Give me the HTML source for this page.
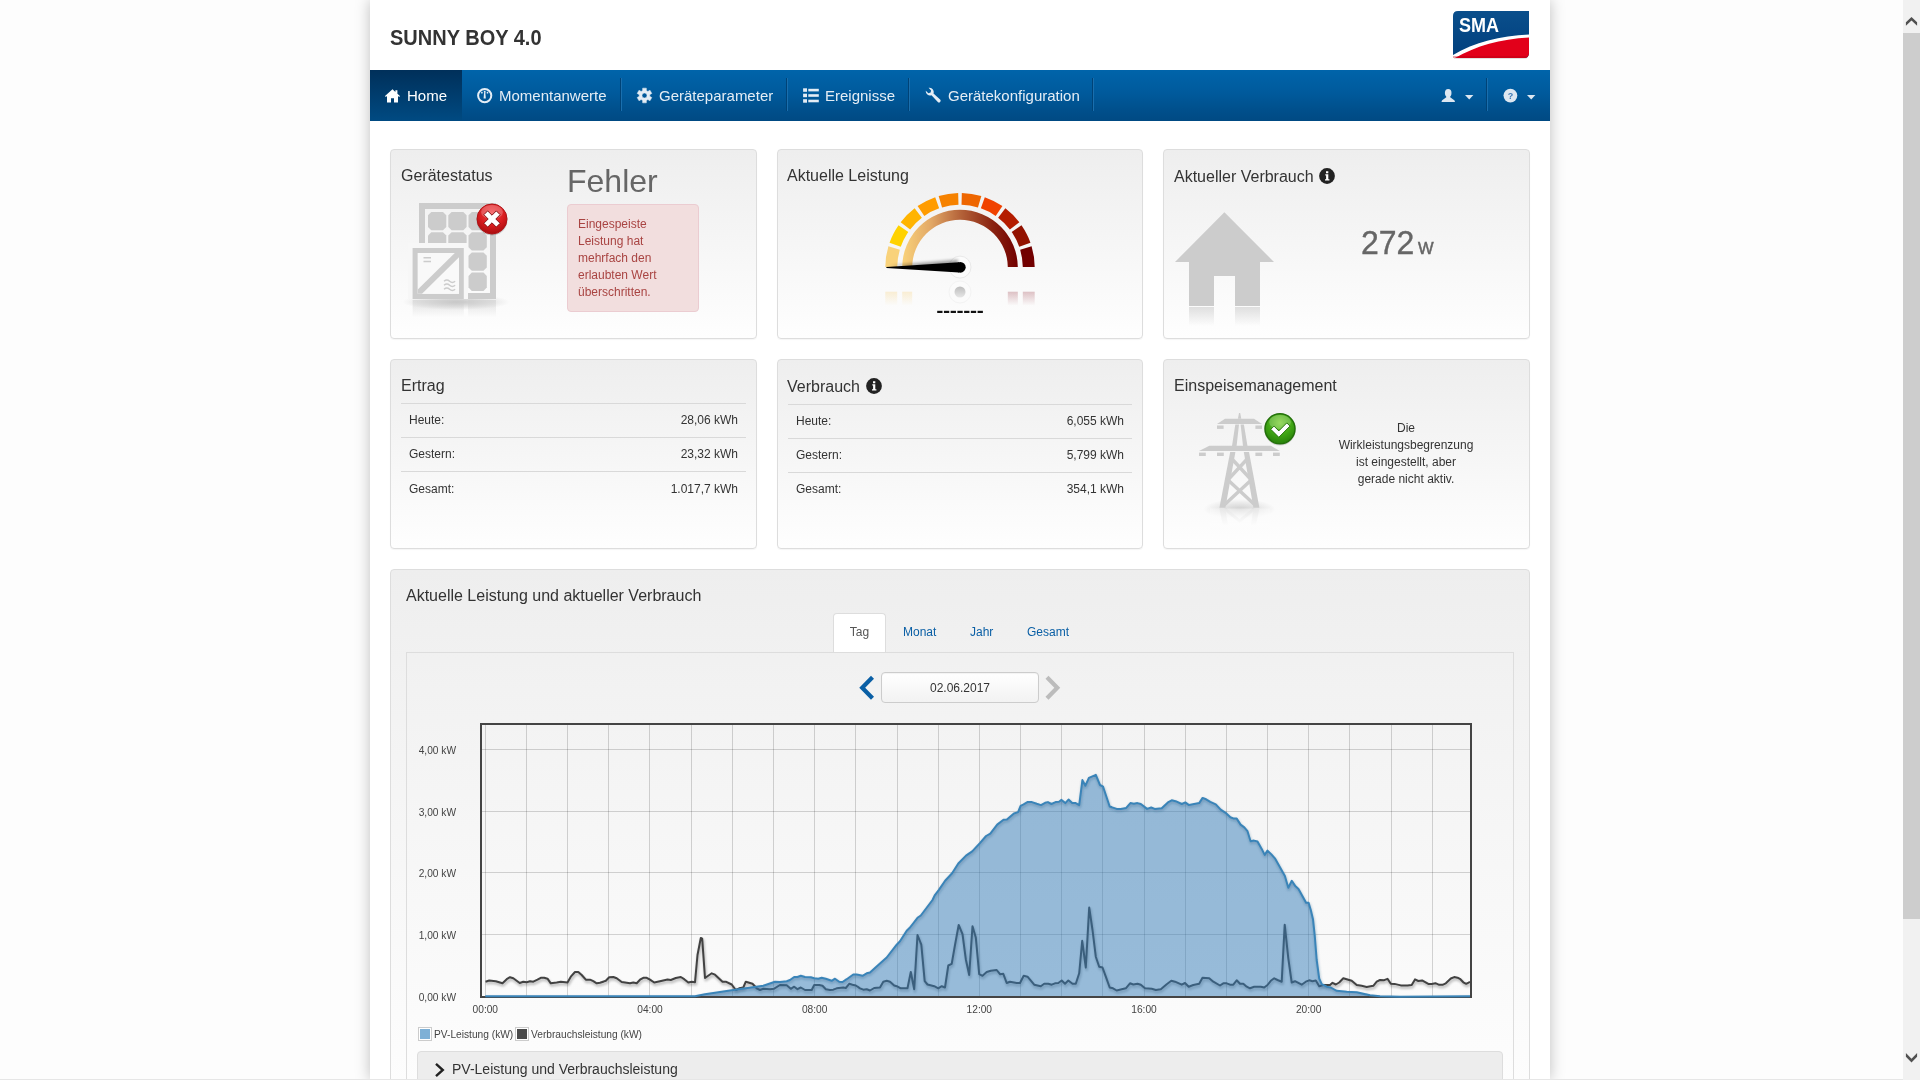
<!DOCTYPE html>
<html lang="de">
<head>
<meta charset="utf-8">
<title>SUNNY BOY 4.0</title>
<style>
*{box-sizing:border-box;margin:0;padding:0}
html,body{width:1920px;height:1080px;overflow:hidden;background:#fdfdfd;font-family:"Liberation Sans",sans-serif;color:#333}
.abs{position:absolute}
#wrap{will-change:transform;overflow:hidden;position:absolute;left:370px;top:0;width:1180px;height:1080px;background:#fff;box-shadow:0 0 14px rgba(0,0,0,.25)}
#title{transform:scaleY(1.07);transform-origin:0 18.6px;position:absolute;left:20px;top:26px;font-size:20px;font-weight:bold;color:#333;line-height:24px;white-space:nowrap}
#nav{position:absolute;left:0;top:70px;width:1180px;height:51px;background:linear-gradient(#0064aa 0%,#005a9c 45%,#004f8b 80%,#004a83 100%)}
#nav .act{position:absolute;left:0;top:0;width:92px;height:51px;background:linear-gradient(#00305a,#004a82)}
#nav .t{position:absolute;top:16px;font-size:15px;line-height:20px;color:#e4edf5;white-space:nowrap}
#nav .dv{position:absolute;top:8px;width:2px;height:33px;background:linear-gradient(90deg,#004377 0,#004377 1px,#1a6fae 1px,#1a6fae 2px)}
#nav svg{position:absolute}
.card{position:absolute;width:367px;height:190px;border:1px solid #ddd;border-radius:4px;background:linear-gradient(#eee,#fefefe);box-shadow:0 1px 1px rgba(0,0,0,.04)}
.h4{position:absolute;font-size:16px;line-height:20px;color:#333;white-space:nowrap}
.ln{position:absolute;height:1px;background:#d9d9d9}
.s12{position:absolute;font-size:12px;line-height:17px;color:#333;white-space:nowrap}
.r{text-align:right}
#panel{position:absolute;left:20px;top:569px;width:1140px;height:600px;border:1px solid #ddd;border-radius:4px;background:linear-gradient(#eee 0,#f3f3f3 150px,#fcfcfc 480px,#fff 600px)}
#tabc{position:absolute;left:36px;top:652px;width:1108px;height:500px;border:1px solid #ddd;border-bottom:0}
#sb{position:absolute;left:1903px;top:0;width:17px;height:1080px;background:#f1f1f1}
#sb .th{position:absolute;left:0;top:33px;width:17px;height:886px;background:#cdcdcd}
</style>
</head>
<body>
<div id="wrap">
<div id="title">SUNNY BOY 4.0</div>

<!-- SMA logo -->
<svg class="abs" style="left:1082px;top:10px" width="78" height="50" viewBox="0 0 78 50">
<defs>
<clipPath id="lg"><path d="M6 1H77V43Q77 48 72 48H1V6Q1 1 6 1Z"/></clipPath>
<linearGradient id="lgb" x1="0" y1="0" x2="0" y2="1"><stop offset="0" stop-color="#0a4f8c"/><stop offset="1" stop-color="#003f7d"/></linearGradient>
</defs>
<path d="M6 2H77V44Q77 49 72 49H2V7Q1 2 6 2Z" fill="#000" opacity=".12"/>
<g clip-path="url(#lg)">
<rect x="0" y="0" width="78" height="50" fill="url(#lgb)"/>
<path d="M0 47 C22 34 48 27 78 25.5 V50 H0Z" fill="#e2001a"/>
<path d="M0 45.5 C22 32.5 48 25.5 78 24.5 V27.5 C48 29 24 36 2 48.5 H0Z" fill="#fff"/>
<rect x="0" y="46" width="78" height="3" fill="#b00014" opacity=".35"/>
</g>
<text x="7" y="21.900" font-family="Liberation Sans, sans-serif" font-weight="bold" font-size="19.600" fill="#fff" textLength="40" lengthAdjust="spacingAndGlyphs">SMA</text>
</svg>

<div id="nav">
<div class="act"></div>
<!-- home icon -->
<svg style="left:15px;top:19px" width="15" height="14" viewBox="0 0 15 14"><path d="M7.5 0.3 L10.4 2.9 V1.2 H12.4 V4.7 L15 7 L14.2 7.9 L13 6.9 V13.6 H9 V9.2 H6 V13.6 H2 V6.9 L0.8 7.9 L0 7 Z" fill="#fff"/></svg>
<div class="t" style="left:37px;color:#fff">Home</div>
<!-- dashboard icon -->
<svg style="left:106px;top:17px" width="18" height="18" viewBox="0 0 18 18"><circle cx="8.700" cy="8.600" r="6.600" fill="none" stroke="#e4edf5" stroke-width="2"/><path d="M8.100 5.200h1.200l.5 6.200h-2.200z" fill="#e4edf5"/><circle cx="8.700" cy="4.700" r=".95" fill="#e4edf5"/><circle cx="5.900" cy="5.700" r=".85" fill="#e4edf5"/><circle cx="11.500" cy="5.700" r=".85" fill="#e4edf5"/></svg>
<div class="t" style="left:129px">Momentanwerte</div>
<div class="dv" style="left:250px"></div>
<!-- cog -->
<svg style="left:266px;top:17px" width="17" height="17" viewBox="0 0 17 17"><path fill="#e4edf5" stroke="#e4edf5" stroke-width=".5" stroke-linejoin="round" fill-rule="evenodd" transform="translate(.5,.5)" d="M9.90 3.05L9.84 0.63L6.16 0.63L6.10 3.05L4.66 3.88L2.53 2.72L0.69 5.91L2.77 7.17L2.77 8.83L0.69 10.09L2.53 13.28L4.66 12.12L6.10 12.95L6.16 15.37L9.84 15.37L9.90 12.95L11.34 12.12L13.47 13.28L15.31 10.09L13.23 8.83L13.23 7.17L15.31 5.91L13.47 2.72L11.34 3.88ZM5.50 8.00a2.50 2.50 0 1 0 5.00 0a2.50 2.50 0 1 0 -5.00 0Z"/></svg>
<div class="t" style="left:289px">Geräteparameter</div>
<div class="dv" style="left:416px"></div>
<!-- list -->
<svg style="left:432px;top:18px" width="18" height="16" viewBox="0 0 18 16"><g fill="#e4edf5"><rect x="1.100" y="0.300" width="3.900" height="3.500"/><rect x="6.300" y="0.800" width="10.500" height="2.600"/><rect x="1.100" y="5.700" width="3.900" height="3.500"/><rect x="6.300" y="6.200" width="10.500" height="2.600"/><rect x="1.100" y="11.200" width="3.900" height="3.500"/><rect x="6.300" y="11.700" width="10.500" height="2.600"/></g></svg>
<div class="t" style="left:455px">Ereignisse</div>
<div class="dv" style="left:538px"></div>
<!-- wrench -->
<svg style="left:553.500px;top:17.200px" width="17" height="16" viewBox="0 0 17 16"><path fill="#e4edf5" d="M4.600 0.800 a4.3 4.3 0 0 1 4.9 5.6 l6.6 6.2 a1.6 1.6 0 0 1 -2.3 2.3 l-6.3 -6.6 a4.3 4.3 0 0 1 -5.7 -4.6 l2.6 2.5 2.2 -.6 .5 -2.2z"/></svg>
<div class="t" style="left:578px">Gerätekonfiguration</div>
<div class="dv" style="left:722px"></div>
<!-- user -->
<svg style="left:1071px;top:19px" width="15" height="14" viewBox="0 0 15 14"><g fill="#dde7f1"><ellipse cx="7.200" cy="4" rx="3.300" ry="3.900"/><path d="M5.300 6.500V8.300L1.200 11.300Q0.500 11.900 0.600 12.900H13.900Q14 11.900 13.300 11.300L9.200 8.300V6.500Z"/></g></svg>
<svg style="left:1095px;top:25px" width="9" height="5" viewBox="0 0 9 5"><path d="M0 0H8.400L4.200 4.400Z" fill="#dde7f1"/></svg>
<div class="dv" style="left:1116px"></div>
<!-- help -->
<svg style="left:1133px;top:18px" width="15" height="15" viewBox="0 0 15 15"><circle cx="7.400" cy="7.600" r="6.900" fill="#dde7f1"/><text x="7.400" y="10.700" text-anchor="middle" font-family="Liberation Sans, sans-serif" font-weight="bold" font-size="9" fill="#3f7ab5">?</text></svg>
<svg style="left:1157px;top:25px" width="9" height="5" viewBox="0 0 9 5"><path d="M0 0H8.400L4.200 4.400Z" fill="#dde7f1"/></svg>
</div>
<!-- ROW 1 -->
<div class="card" style="left:20px;top:149px"></div>
<div class="card" style="left:407px;top:149px;width:366px"></div>
<div class="card" style="left:793px;top:149px"></div>
<!-- ROW 2 -->
<div class="card" style="left:20px;top:359px"></div>
<div class="card" style="left:407px;top:359px;width:366px"></div>
<div class="card" style="left:793px;top:359px"></div>

<!-- card 1: Gerätestatus -->
<div class="h4" style="left:31px;top:166px">Gerätestatus</div>
<div class="abs" style="left:197px;top:163px;font-size:32px;line-height:36px;color:#666;white-space:nowrap">Fehler</div>
<div class="abs" style="left:197px;top:204px;width:132px;height:108px;background:#f2dede;border:1px solid #ebccd1;border-radius:4px"></div>
<div class="s12" style="left:208px;top:216px;color:#a94442">Eingespeiste<br>Leistung hat<br>mehrfach den<br>erlaubten Wert<br>überschritten.</div>
<!-- pv + inverter icon -->
<svg class="abs" style="left:30px;top:195px" width="110" height="130" viewBox="0 0 110 130">
<defs>
<linearGradient id="rf1" x1="0" y1="0" x2="0" y2="1"><stop offset="0" stop-color="#ccc" stop-opacity=".55"/><stop offset="1" stop-color="#ccc" stop-opacity="0"/></linearGradient>
<radialGradient id="sh1" cx=".5" cy=".5" r=".5"><stop offset="0" stop-color="#000" stop-opacity=".22"/><stop offset="1" stop-color="#000" stop-opacity="0"/></radialGradient>
<radialGradient id="rd" cx=".5" cy=".3" r=".7"><stop offset="0" stop-color="#f4484b"/><stop offset=".6" stop-color="#d81c1f"/><stop offset="1" stop-color="#a80e10"/></radialGradient>
</defs>
<ellipse cx="56" cy="107" rx="54" ry="8" fill="url(#sh1)"/>
<g fill="#ccc">
<path fill-rule="evenodd" d="M19 8H96V104H19ZM25 14V98H90V14Z"/>
<path d="M31.3 17.0h11.7l3.3 3.3v11.7l-3.3 3.3h-11.7l-3.3 -3.3v-11.7z"/><path d="M51.6 17.0h11.7l3.3 3.3v11.7l-3.3 3.3h-11.7l-3.3 -3.3v-11.7z"/><path d="M71.8 17.0h11.7l3.3 3.3v11.7l-3.3 3.3h-11.7l-3.3 -3.3v-11.7z"/><path d="M31.3 37.2h11.7l3.3 3.3v11.7l-3.3 3.3h-11.7l-3.3 -3.3v-11.7z"/><path d="M51.6 37.2h11.7l3.3 3.3v11.7l-3.3 3.3h-11.7l-3.3 -3.3v-11.7z"/><path d="M71.8 37.2h11.7l3.3 3.3v11.7l-3.3 3.3h-11.7l-3.3 -3.3v-11.7z"/><path d="M71.8 57.4h11.7l3.3 3.3v11.7l-3.3 3.3h-11.7l-3.3 -3.3v-11.7z"/><path d="M71.8 77.6h11.7l3.3 3.3v11.7l-3.3 3.3h-11.7l-3.3 -3.3v-11.7z"/>
</g>
<rect x="8" y="48" width="60" height="56" fill="#f7f7f7"/>
<path fill="#ccc" fill-rule="evenodd" d="M12.600 53H63.800V104H12.600ZM17.800 58V98.800H59V58Z"/>
<rect x="17.800" y="58" width="41.200" height="40.800" fill="#f9f9f9"/>
<path d="M17.800 98.800V94.600L54.800 58H59V62.200L22 98.800Z" fill="#ccc"/>
<g stroke="#ccc" stroke-width="1.500" fill="none"><path d="M23.500 62.800h7.500M23.500 66.600h7.500"/><path d="M44 86.200c2-1.700 3.700-1.700 5.600 0s3.600 1.700 5.500 0M44 90.200c2-1.700 3.700-1.700 5.600 0s3.600 1.700 5.500 0M44 94.200c2-1.700 3.700-1.700 5.600 0s3.600 1.700 5.500 0"/></g>
<!-- reflection -->
<rect x="12.600" y="105" width="51.200" height="17" fill="url(#rf1)"/>
<rect x="68" y="105" width="28" height="17" fill="url(#rf1)"/>
<!-- red error badge -->
<circle cx="92" cy="25" r="15.500" fill="#000" opacity=".18"/>
<circle cx="92" cy="24" r="15" fill="url(#rd)" stroke="#b01215" stroke-width="1"/>
<ellipse cx="92" cy="17" rx="11" ry="7" fill="#fff" opacity=".22"/>
<path d="M83.900 19.700l3.800-3.800 4.300 4.300 4.300-4.300 3.800 3.800-4.300 4.300 4.300 4.300-3.800 3.800-4.300-4.300-4.300 4.300-3.800-3.800 4.300-4.300z" fill="#fff" stroke="#7a0a0c" stroke-width=".9"/>
</svg>

<!-- card 2: Aktuelle Leistung -->
<div class="h4" style="left:417px;top:166px">Aktuelle Leistung</div>
<svg class="abs" style="left:500px;top:180px" width="180" height="150" viewBox="0 0 180 150">
<defs><linearGradient id="gi" x1="0" y1="0" x2="1" y2="0"><stop offset="0" stop-color="#f9d27a"/><stop offset=".25" stop-color="#e2a866"/><stop offset=".5" stop-color="#b5643a"/><stop offset=".78" stop-color="#8a2412"/><stop offset="1" stop-color="#720000"/></linearGradient>
<linearGradient id="gfade" x1="0" y1="0" x2="0" y2="1"><stop offset="0" stop-color="#fff" stop-opacity=".55"/><stop offset="1" stop-color="#fff" stop-opacity="1"/></linearGradient>
<linearGradient id="hubr" x1="0" y1="0" x2="0" y2="1"><stop offset="0" stop-color="#bdbdbd"/><stop offset="1" stop-color="#e6e6e6"/></linearGradient>
<filter id="nb" x="-20%" y="-100%" width="140%" height="300%"><feGaussianBlur stdDeviation="1.6"/></filter></defs>
<clipPath id="gcl"><rect x="0" y="0" width="180" height="86.9"/></clipPath><g clip-path="url(#gcl)">
<path d="M15.30 87.60A74.7 74.7 0 0 1 18.41 66.26L29.82 69.66A62.8 62.8 0 0 0 27.20 87.60Z" fill="#f9d27a"/>
<path d="M19.54 62.79A74.7 74.7 0 0 1 28.51 45.18L38.31 51.94A62.8 62.8 0 0 0 30.77 66.74Z" fill="#ffd200"/>
<path d="M30.66 42.23A74.7 74.7 0 0 1 44.63 28.26L51.86 37.71A62.8 62.8 0 0 0 40.11 49.46Z" fill="#ffb400"/>
<path d="M47.58 26.11A74.7 74.7 0 0 1 65.19 17.14L69.14 28.37A62.8 62.8 0 0 0 54.34 35.91Z" fill="#ff9c00"/>
<path d="M68.66 16.01A74.7 74.7 0 0 1 88.17 12.92L88.47 24.82A62.8 62.8 0 0 0 72.06 27.42Z" fill="#f68200"/>
<path d="M91.83 12.92A74.7 74.7 0 0 1 111.34 16.01L107.94 27.42A62.8 62.8 0 0 0 91.53 24.82Z" fill="#ee6600"/>
<path d="M114.81 17.14A74.7 74.7 0 0 1 132.42 26.11L125.66 35.91A62.8 62.8 0 0 0 110.86 28.37Z" fill="#f04200"/>
<path d="M135.37 28.26A74.7 74.7 0 0 1 149.34 42.23L139.89 49.46A62.8 62.8 0 0 0 128.14 37.71Z" fill="#b41c00"/>
<path d="M151.49 45.18A74.7 74.7 0 0 1 160.46 62.79L149.23 66.74A62.8 62.8 0 0 0 141.69 51.94Z" fill="#921200"/>
<path d="M161.59 66.26A74.7 74.7 0 0 1 164.70 87.60L152.80 87.60A62.8 62.8 0 0 0 150.18 69.66Z" fill="#720000"/>
<path d="M32.20 87.60A57.8 57.8 0 0 1 147.80 87.60L137.80 87.60A47.8 47.8 0 0 0 42.20 87.60Z" fill="url(#gi)"/>
</g>
<linearGradient id="rfg1" x1="0" y1="0" x2="0" y2="1"><stop offset="0" stop-color="#f6c964" stop-opacity=".26"/><stop offset="1" stop-color="#f6c964" stop-opacity="0"/></linearGradient>
<rect x="15.30" y="111.7" width="11.90" height="14" fill="url(#rfg1)"/>
<linearGradient id="rfg2" x1="0" y1="0" x2="0" y2="1"><stop offset="0" stop-color="#f6c964" stop-opacity=".26"/><stop offset="1" stop-color="#f6c964" stop-opacity="0"/></linearGradient>
<rect x="32.20" y="111.7" width="10.00" height="14" fill="url(#rfg2)"/>
<linearGradient id="rfg3" x1="0" y1="0" x2="0" y2="1"><stop offset="0" stop-color="#8a1c2a" stop-opacity=".26"/><stop offset="1" stop-color="#8a1c2a" stop-opacity="0"/></linearGradient>
<rect x="137.80" y="111.7" width="10.00" height="14" fill="url(#rfg3)"/>
<linearGradient id="rfg4" x1="0" y1="0" x2="0" y2="1"><stop offset="0" stop-color="#8a1c2a" stop-opacity=".26"/><stop offset="1" stop-color="#8a1c2a" stop-opacity="0"/></linearGradient>
<rect x="152.80" y="111.7" width="11.90" height="14" fill="url(#rfg4)"/>
<circle cx="90.0" cy="87.1" r="11" fill="#fcfcfc" stroke="#e9e9e9" stroke-width="1"/>
<circle cx="90.0" cy="112.0" r="11" fill="#fbfbfb" stroke="#f3f3f3" stroke-width="1"/>
<circle cx="90.0" cy="112.0" r="5.5" fill="url(#hubr)"/>
<path d="M20.0 85.4L88.0 79.6L88.0 88.6Z" fill="#000" opacity=".35" filter="url(#nb)"/>
<path d="M16.4 86.9L89.0 82.2L89.0 92.6L16.4 88.1Z" fill="#000"/>
<circle cx="90.3" cy="87.3" r="5.4" fill="#000"/>
<rect x="67.20" y="130.800" width="5.300" height="2.200" fill="#111"/>
<rect x="73.93" y="130.800" width="5.300" height="2.200" fill="#111"/>
<rect x="80.66" y="130.800" width="5.300" height="2.200" fill="#111"/>
<rect x="87.39" y="130.800" width="5.300" height="2.200" fill="#111"/>
<rect x="94.12" y="130.800" width="5.300" height="2.200" fill="#111"/>
<rect x="100.85" y="130.800" width="5.300" height="2.200" fill="#111"/>
<rect x="107.58" y="130.800" width="5.300" height="2.200" fill="#111"/>
</svg>

<!-- card 3: Aktueller Verbrauch -->
<div class="h4" style="left:804px;top:167px">Aktueller Verbrauch</div>
<svg class="abs" style="left:949px;top:168px" width="16" height="16" viewBox="0 0 16 16"><circle cx="8" cy="8" r="7.900" fill="#222"/><path d="M6.300 6.300h3v5h1.100v1.300H6v-1.300h1.100V7.600H6.300zM7 3.200h2.300v2H7z" fill="#fff"/></svg>
<svg class="abs" style="left:800px;top:208px" width="110" height="125" viewBox="0 0 110 125">
<defs><linearGradient id="rf3" x1="0" y1="0" x2="0" y2="1"><stop offset="0" stop-color="#ccc" stop-opacity=".6"/><stop offset="1" stop-color="#ccc" stop-opacity="0"/></linearGradient></defs>
<path d="M54.400 4.300 L104 54 H90 V98 H65 V68 H44 V98 H19 V54 H5 Z" fill="#ccc"/>
<rect x="19" y="99" width="25" height="19" fill="url(#rf3)"/><rect x="65" y="99" width="25" height="19" fill="url(#rf3)"/>
</svg>
<div class="abs" style="left:991px;top:224.500px;font-size:32px;line-height:36px;color:#666;white-space:nowrap;-webkit-text-stroke:.35px #666;transform:scaleY(1.04);transform-origin:0 29.500px">272<span style="font-size:16.500px;margin-left:3.500px;-webkit-text-stroke:.5px #666">W</span></div>

<!-- card 4: Ertrag -->
<div class="h4" style="left:31px;top:376px">Ertrag</div>
<div class="ln" style="left:31px;top:403px;width:345px"></div>
<div class="ln" style="left:31px;top:437px;width:345px"></div>
<div class="ln" style="left:31px;top:471px;width:345px"></div>
<div class="s12" style="left:39px;top:412px">Heute:</div><div class="s12 r" style="left:217px;width:151px;top:412px">28,06 kWh</div>
<div class="s12" style="left:39px;top:446px">Gestern:</div><div class="s12 r" style="left:217px;width:151px;top:446px">23,32 kWh</div>
<div class="s12" style="left:39px;top:481px">Gesamt:</div><div class="s12 r" style="left:217px;width:151px;top:481px">1.017,7 kWh</div>

<!-- card 5: Verbrauch -->
<div class="h4" style="left:417px;top:377px">Verbrauch</div>
<svg class="abs" style="left:496px;top:378px" width="16" height="16" viewBox="0 0 16 16"><circle cx="8" cy="8" r="7.900" fill="#222"/><path d="M6.300 6.300h3v5h1.100v1.300H6v-1.300h1.100V7.600H6.300zM7 3.200h2.300v2H7z" fill="#fff"/></svg>
<div class="ln" style="left:418px;top:404px;width:344px"></div>
<div class="ln" style="left:418px;top:438px;width:344px"></div>
<div class="ln" style="left:418px;top:472px;width:344px"></div>
<div class="s12" style="left:426px;top:413px">Heute:</div><div class="s12 r" style="left:604px;width:150px;top:413px">6,055 kWh</div>
<div class="s12" style="left:426px;top:447px">Gestern:</div><div class="s12 r" style="left:604px;width:150px;top:447px">5,799 kWh</div>
<div class="s12" style="left:426px;top:481px">Gesamt:</div><div class="s12 r" style="left:604px;width:150px;top:481px">354,1 kWh</div>

<!-- card 6: Einspeisemanagement -->
<div class="h4" style="left:804px;top:376px">Einspeisemanagement</div>
<div class="s12" style="left:936px;top:420px;width:200px;text-align:center">Die<br>Wirkleistungsbegrenzung<br>ist eingestellt, aber<br>gerade nicht aktiv.</div>
<svg class="abs" style="left:820px;top:405px" width="120" height="130" viewBox="0 0 120 130">
<defs><radialGradient id="sh6" cx=".5" cy=".5" r=".5"><stop offset="0" stop-color="#000" stop-opacity=".17"/><stop offset="1" stop-color="#000" stop-opacity="0"/></radialGradient>
<linearGradient id="rf6" x1="0" y1="0" x2="0" y2="1"><stop offset="0" stop-color="#fafafa" stop-opacity=".45"/><stop offset="1" stop-color="#fdfdfd" stop-opacity="1"/></linearGradient>
<radialGradient id="gr" cx=".5" cy=".3" r=".75"><stop offset="0" stop-color="#7fd03a"/><stop offset=".55" stop-color="#3fa414"/><stop offset="1" stop-color="#237a08"/></radialGradient></defs>
<ellipse cx="49.600" cy="104" rx="36" ry="10" fill="url(#sh6)"/>
<g fill="#ccc"><path d="M49 8h1.200l1.100 5.800h-3.400z"/><path d="M35 13.800H64L72 19H27Z"/><rect x="27" y="20.500" width="6.600" height="3.400"/><rect x="65.400" y="20.500" width="6.600" height="3.400"/><path d="M45.300 19.500h3.700l-2.400 21.500h-4.600zM50.600 19.500h3.300l3.600 21.500h-4.500z"/><path d="M19.400 40.800H80.800L89.800 46H9Z"/><rect x="9" y="47.600" width="6.800" height="3.400"/><rect x="27" y="47.600" width="6.800" height="3.400"/><rect x="65.4" y="47.600" width="6.800" height="3.400"/><rect x="83" y="47.600" width="6.800" height="3.400"/><path d="M40.200 47h5.200L35.400 102.700h-6z"/><path d="M53.800 47h5.200L69.400 102.700h-6z"/></g>
<g stroke="#ccc" stroke-width="3.400" fill="none" stroke-linecap="butt"><path d="M42 54L60.500 74M57.200 54L38.700 74M38 75L65 100M61.200 75L34.200 100"/></g>
<g fill="#ccc" opacity=".5"><path d="M29.400 103.700h6l2.500 16h-5.200zM63.400 103.700h6l-3.300 16h-5.200z"/><path d="M35 104L49.600 116 64 104" stroke="#ccc" stroke-width="3" fill="none"/></g>
<rect x="20" y="103.500" width="60" height="18" fill="url(#rf6)"/>
<circle cx="90" cy="25" r="15.500" fill="#000" opacity=".15"/>
<circle cx="90" cy="23.800" r="15" fill="url(#gr)" stroke="#23700a" stroke-width="1.500"/>
<ellipse cx="90" cy="17" rx="11" ry="7" fill="#fff" opacity=".2"/>
<path d="M80.800 24.300l3.200-3.200 4.800 4.800 8-8 3.200 3.200-11.200 11.200z" fill="#fff" stroke="#1e6a05" stroke-width=".9"/>
</svg>
<!-- chart panel -->
<div id="panel"></div>
<div class="h4" style="left:36px;top:586px">Aktuelle Leistung und aktueller Verbrauch</div>
<div id="tabc"></div>
<div class="abs" style="left:463px;top:613px;width:53px;height:39px;background:#fff;border:1px solid #ddd;border-bottom:0;border-radius:4px 4px 0 0"></div>
<div class="s12" style="left:463px;width:53px;text-align:center;top:624px;color:#555">Tag</div>
<div class="s12" style="left:533px;top:624px;color:#0a5fa5">Monat</div>
<div class="s12" style="left:600px;top:624px;color:#0a5fa5">Jahr</div>
<div class="s12" style="left:657px;top:624px;color:#0a5fa5">Gesamt</div>
<!-- date nav -->
<svg class="abs" style="left:488px;top:674px" width="20" height="28" viewBox="0 0 20 28"><path d="M14.500 3.200L4.200 13.700 14.500 24.300" fill="none" stroke="#0a5fa5" stroke-width="4.200" stroke-linejoin="miter"/></svg>
<div class="abs" style="left:511px;top:672px;width:158px;height:31px;border:1px solid #ccc;border-radius:4px;background:linear-gradient(#fff,#f2f2f2);box-shadow:inset 0 1px 1px rgba(0,0,0,.05)"></div>
<div class="s12" style="left:511px;width:158px;text-align:center;top:680px;color:#333">02.06.2017</div>
<svg class="abs" style="left:673px;top:674px" width="20" height="28" viewBox="0 0 20 28"><path d="M4 3.200L14.300 13.700 4 24.300" fill="none" stroke="#bcbcbc" stroke-width="4.200" stroke-linejoin="miter"/></svg>
<svg class="abs" style="left:30px;top:715px" width="1100" height="310" viewBox="0 0 1100 310">
<defs><clipPath id="pc"><rect x="81" y="9" width="990" height="273"/></clipPath><clipPath id="pc2"><rect x="82" y="10" width="988" height="273"/></clipPath>
<filter id="ls" x="-2%" y="-10%" width="104%" height="130%"><feGaussianBlur stdDeviation="1.1"/></filter></defs>
<path d="M85.5 9V282M126.5 9V282M167.5 9V282M208.5 9V282M249.5 9V282M291.5 9V282M332.5 9V282M373.5 9V282M414.5 9V282M455.5 9V282M497.5 9V282M538.5 9V282M579.5 9V282M620.5 9V282M661.5 9V282M702.5 9V282M744.5 9V282M785.5 9V282M826.5 9V282M867.5 9V282M908.5 9V282M949.5 9V282M991.5 9V282M1032.5 9V282" stroke="#000" stroke-opacity=".16" stroke-width="1" fill="none"/>
<path d="M81 34.5H1071M81 96.5H1071M81 157.5H1071M81 219.5H1071" stroke="#000" stroke-opacity=".16" stroke-width="1" fill="none"/>
<g clip-path="url(#pc)">
<path d="M85.5 266.7L89.2 265.5L95.8 266.2L102.5 268.3L106.7 264.2L110.0 262.2L113.3 263.3L119.7 268.0L123.3 266.7L126.7 267.2L130.0 266.2L133.3 266.7L137.5 264.7L140.8 262.8L144.2 262.8L147.5 263.7L150.8 268.3L156.7 267.5L160.8 266.7L167.5 267.5L170.8 261.7L175.0 257.0L178.3 257.0L181.7 260.0L185.8 264.7L190.0 264.7L193.3 266.2L196.7 268.3L200.0 267.8L205.8 265.8L209.2 262.2L213.3 262.0L216.7 263.3L221.7 267.0L226.7 267.8L230.0 268.3L233.3 267.5L236.7 268.3L240.0 264.7L243.3 262.8L246.7 262.8L250.0 264.7L254.2 267.5L260.0 266.2L267.5 264.5L270.8 265.0L275.8 263.0L280.8 262.0L284.2 264.2L288.3 267.5L291.7 266.7L295.0 267.2L297.5 240.0L300.8 223.0L302.2 223.7L305.0 263.0L311.7 258.3L315.0 259.7L322.5 266.7L325.8 266.7L331.7 269.5L335.8 275.0L339.2 273.3L343.3 272.5L345.8 266.7L349.2 267.8L352.5 268.8L356.7 273.3L360.0 275.0L363.3 273.8L370.0 274.2L374.2 273.7L380.0 270.0L386.7 270.3L390.8 273.8L394.2 271.7L397.5 274.2L400.8 272.5L405.0 275.0L411.7 275.0L414.2 270.0L419.2 270.0L422.5 270.8L425.8 274.2L430.0 275.0L433.3 274.7L436.7 273.3L443.3 272.5L445.8 273.0L449.2 268.8L452.5 269.7L455.8 270.5L460.0 273.3L463.3 274.7L466.7 274.2L470.0 275.5L474.2 273.0L480.0 272.5L483.3 266.7L486.7 265.8L490.0 266.7L494.2 270.5L496.7 271.2L500.8 273.3L507.5 273.3L510.8 257.0L514.2 274.2L517.5 220.0L521.3 229.7L524.7 266.2L527.5 269.5L534.2 271.2L538.3 273.3L541.7 271.2L545.0 272.5L548.3 250.5L551.7 248.8L555.0 230.0L558.7 210.0L562.5 219.2L565.8 244.2L569.2 260.0L572.5 211.3L575.8 222.5L579.2 259.2L582.5 260.8L586.7 257.0L590.8 255.8L596.7 255.0L600.0 259.2L603.3 258.8L606.7 268.0L610.0 266.7L616.7 268.0L620.0 268.0L623.7 260.8L627.5 261.7L634.2 269.7L640.8 271.2L644.2 268.8L648.3 268.8L651.7 269.7L655.0 268.3L658.3 268.0L661.7 265.5L665.0 268.8L668.3 265.5L672.5 268.8L675.8 268.8L679.2 258.3L682.2 225.8L685.8 252.5L689.2 192.5L692.5 215.0L695.8 241.7L699.2 251.7L702.5 252.5L705.8 261.7L709.7 272.5L713.0 273.3L716.7 275.5L725.8 273.3L730.0 268.3L733.3 269.5L737.5 268.7L740.8 269.7L745.0 273.3L751.7 273.8L755.8 275.0L760.8 274.2L766.7 269.2L771.3 265.8L775.0 266.7L781.7 269.7L785.0 268.0L788.7 271.7L793.3 270.0L799.2 268.8L802.5 262.8L809.2 263.3L813.3 266.7L820.0 270.5L823.3 268.3L826.7 268.3L830.0 269.7L833.3 269.7L836.7 265.3L840.0 268.8L843.3 268.8L846.7 271.7L850.0 273.3L854.2 271.7L860.8 271.7L864.2 272.5L867.5 270.0L870.8 265.8L874.2 263.3L877.5 265.0L881.7 266.7L884.7 209.7L888.3 243.3L891.7 267.5L895.0 266.2L901.7 269.7L905.8 266.7L909.2 265.3L912.5 266.2L915.8 265.5L919.2 271.2L923.3 270.0L930.0 270.0L932.5 267.8L935.8 269.5L939.2 267.5L943.3 263.3L948.3 264.7L951.7 265.8L956.7 270.0L961.7 270.8L966.7 272.0L973.3 270.8L976.7 266.7L980.0 265.0L984.2 265.2L987.5 263.8L990.8 268.8L994.6 268.9L1000.8 270.4L1007.5 270.6L1011.7 270.0L1015.0 264.4L1018.3 266.0L1022.1 265.4L1028.3 268.9L1031.7 268.9L1035.4 268.2L1039.2 269.8L1042.5 269.8L1045.8 268.3L1050.8 263.5L1054.2 262.1L1057.5 262.7L1060.4 264.2L1063.3 267.3L1066.2 268.8L1070.0 266.9" transform="translate(0.8,2)" stroke="#000" stroke-opacity=".22" stroke-width="3" fill="none" filter="url(#ls)" stroke-linejoin="round"/>
<path d="M85.5 266.7L89.2 265.5L95.8 266.2L102.5 268.3L106.7 264.2L110.0 262.2L113.3 263.3L119.7 268.0L123.3 266.7L126.7 267.2L130.0 266.2L133.3 266.7L137.5 264.7L140.8 262.8L144.2 262.8L147.5 263.7L150.8 268.3L156.7 267.5L160.8 266.7L167.5 267.5L170.8 261.7L175.0 257.0L178.3 257.0L181.7 260.0L185.8 264.7L190.0 264.7L193.3 266.2L196.7 268.3L200.0 267.8L205.8 265.8L209.2 262.2L213.3 262.0L216.7 263.3L221.7 267.0L226.7 267.8L230.0 268.3L233.3 267.5L236.7 268.3L240.0 264.7L243.3 262.8L246.7 262.8L250.0 264.7L254.2 267.5L260.0 266.2L267.5 264.5L270.8 265.0L275.8 263.0L280.8 262.0L284.2 264.2L288.3 267.5L291.7 266.7L295.0 267.2L297.5 240.0L300.8 223.0L302.2 223.7L305.0 263.0L311.7 258.3L315.0 259.7L322.5 266.7L325.8 266.7L331.7 269.5L335.8 275.0L339.2 273.3L343.3 272.5L345.8 266.7L349.2 267.8L352.5 268.8L356.7 273.3L360.0 275.0L363.3 273.8L370.0 274.2L374.2 273.7L380.0 270.0L386.7 270.3L390.8 273.8L394.2 271.7L397.5 274.2L400.8 272.5L405.0 275.0L411.7 275.0L414.2 270.0L419.2 270.0L422.5 270.8L425.8 274.2L430.0 275.0L433.3 274.7L436.7 273.3L443.3 272.5L445.8 273.0L449.2 268.8L452.5 269.7L455.8 270.5L460.0 273.3L463.3 274.7L466.7 274.2L470.0 275.5L474.2 273.0L480.0 272.5L483.3 266.7L486.7 265.8L490.0 266.7L494.2 270.5L496.7 271.2L500.8 273.3L507.5 273.3L510.8 257.0L514.2 274.2L517.5 220.0L521.3 229.7L524.7 266.2L527.5 269.5L534.2 271.2L538.3 273.3L541.7 271.2L545.0 272.5L548.3 250.5L551.7 248.8L555.0 230.0L558.7 210.0L562.5 219.2L565.8 244.2L569.2 260.0L572.5 211.3L575.8 222.5L579.2 259.2L582.5 260.8L586.7 257.0L590.8 255.8L596.7 255.0L600.0 259.2L603.3 258.8L606.7 268.0L610.0 266.7L616.7 268.0L620.0 268.0L623.7 260.8L627.5 261.7L634.2 269.7L640.8 271.2L644.2 268.8L648.3 268.8L651.7 269.7L655.0 268.3L658.3 268.0L661.7 265.5L665.0 268.8L668.3 265.5L672.5 268.8L675.8 268.8L679.2 258.3L682.2 225.8L685.8 252.5L689.2 192.5L692.5 215.0L695.8 241.7L699.2 251.7L702.5 252.5L705.8 261.7L709.7 272.5L713.0 273.3L716.7 275.5L725.8 273.3L730.0 268.3L733.3 269.5L737.5 268.7L740.8 269.7L745.0 273.3L751.7 273.8L755.8 275.0L760.8 274.2L766.7 269.2L771.3 265.8L775.0 266.7L781.7 269.7L785.0 268.0L788.7 271.7L793.3 270.0L799.2 268.8L802.5 262.8L809.2 263.3L813.3 266.7L820.0 270.5L823.3 268.3L826.7 268.3L830.0 269.7L833.3 269.7L836.7 265.3L840.0 268.8L843.3 268.8L846.7 271.7L850.0 273.3L854.2 271.7L860.8 271.7L864.2 272.5L867.5 270.0L870.8 265.8L874.2 263.3L877.5 265.0L881.7 266.7L884.7 209.7L888.3 243.3L891.7 267.5L895.0 266.2L901.7 269.7L905.8 266.7L909.2 265.3L912.5 266.2L915.8 265.5L919.2 271.2L923.3 270.0L930.0 270.0L932.5 267.8L935.8 269.5L939.2 267.5L943.3 263.3L948.3 264.7L951.7 265.8L956.7 270.0L961.7 270.8L966.7 272.0L973.3 270.8L976.7 266.7L980.0 265.0L984.2 265.2L987.5 263.8L990.8 268.8L994.6 268.9L1000.8 270.4L1007.5 270.6L1011.7 270.0L1015.0 264.4L1018.3 266.0L1022.1 265.4L1028.3 268.9L1031.7 268.9L1035.4 268.2L1039.2 269.8L1042.5 269.8L1045.8 268.3L1050.8 263.5L1054.2 262.1L1057.5 262.7L1060.4 264.2L1063.3 267.3L1066.2 268.8L1070.0 266.9" stroke="#424242" stroke-width="2" fill="none" stroke-linejoin="round"/>
<path d="M85.3 281.3L295.0 281.3L305.0 279.2L330.0 275.5L363.3 270.8L375.0 266.7L380.0 267.0L386.7 266.2L390.0 265.0L394.2 262.0L397.5 262.0L400.8 260.8L405.0 262.0L410.8 262.2L414.2 263.3L418.3 263.8L421.7 262.8L425.8 263.7L431.7 265.8L435.0 263.7L439.2 266.7L442.5 267.0L446.7 264.2L453.3 259.5L456.7 259.5L462.5 260.8L466.7 258.3L470.0 257.5L478.3 250.0L486.7 242.5L496.7 229.7L500.0 226.3L506.7 215.8L510.0 212.5L517.5 202.8L520.8 200.5L532.5 185.0L534.7 180.4L538.9 174.9L545.1 165.8L552.1 158.2L558.3 148.5L566.0 140.6L572.2 136.4L579.9 128.1L586.1 121.0L590.3 118.6L597.2 109.6L603.5 104.7L606.9 104.4L613.9 98.5L618.1 97.1L620.6 90.8L623.6 89.4L627.8 86.9L631.9 87.1L636.8 88.8L641.0 90.1L645.1 87.8L647.9 87.1L651.4 89.0L655.6 87.1L659.0 86.7L661.5 84.9L665.3 88.1L668.5 84.6L672.2 88.1L675.7 88.1L679.2 90.1L682.4 65.1L685.4 70.7L688.9 62.8L695.8 59.9L700.0 70.0L703.1 71.7L709.7 91.5L716.7 93.9L720.8 93.9L726.2 92.9L730.4 88.1L733.9 88.8L737.4 88.1L740.8 89.0L747.1 93.9L751.2 92.5L754.7 93.9L761.7 93.2L767.9 87.4L771.7 85.3L775.6 86.2L781.8 89.0L785.3 87.4L789.0 90.1L799.2 88.1L802.6 82.9L806.1 84.3L810.3 86.9L815.8 89.4L820.7 94.6L825.6 97.8L830.4 102.2L833.9 103.6L836.7 103.6L840.6 109.6L844.3 112.4L847.5 116.2L850.6 126.2L854.0 125.6L857.5 126.5L861.7 133.9L864.7 139.9L867.5 135.6L871.4 139.4L874.9 143.3L879.7 151.7L884.9 161.0L888.3 172.8L891.8 165.8L895.3 171.1L898.5 173.9L906.1 187.8L908.6 187.8L910.8 195.0L913.0 204.2L914.7 220.0L916.7 245.0L919.2 263.3L921.7 269.2L926.7 271.7L930.8 272.5L936.7 275.8L946.7 276.7L956.7 277.2L970.0 280.3L980.0 281.2L1000.0 281.7L1071.0 281.3Z" fill="#337cb8" fill-opacity=".5"/>
<path d="M85.3 281.3L295.0 281.3L305.0 279.2L330.0 275.5L363.3 270.8L375.0 266.7L380.0 267.0L386.7 266.2L390.0 265.0L394.2 262.0L397.5 262.0L400.8 260.8L405.0 262.0L410.8 262.2L414.2 263.3L418.3 263.8L421.7 262.8L425.8 263.7L431.7 265.8L435.0 263.7L439.2 266.7L442.5 267.0L446.7 264.2L453.3 259.5L456.7 259.5L462.5 260.8L466.7 258.3L470.0 257.5L478.3 250.0L486.7 242.5L496.7 229.7L500.0 226.3L506.7 215.8L510.0 212.5L517.5 202.8L520.8 200.5L532.5 185.0L534.7 180.4L538.9 174.9L545.1 165.8L552.1 158.2L558.3 148.5L566.0 140.6L572.2 136.4L579.9 128.1L586.1 121.0L590.3 118.6L597.2 109.6L603.5 104.7L606.9 104.4L613.9 98.5L618.1 97.1L620.6 90.8L623.6 89.4L627.8 86.9L631.9 87.1L636.8 88.8L641.0 90.1L645.1 87.8L647.9 87.1L651.4 89.0L655.6 87.1L659.0 86.7L661.5 84.9L665.3 88.1L668.5 84.6L672.2 88.1L675.7 88.1L679.2 90.1L682.4 65.1L685.4 70.7L688.9 62.8L695.8 59.9L700.0 70.0L703.1 71.7L709.7 91.5L716.7 93.9L720.8 93.9L726.2 92.9L730.4 88.1L733.9 88.8L737.4 88.1L740.8 89.0L747.1 93.9L751.2 92.5L754.7 93.9L761.7 93.2L767.9 87.4L771.7 85.3L775.6 86.2L781.8 89.0L785.3 87.4L789.0 90.1L799.2 88.1L802.6 82.9L806.1 84.3L810.3 86.9L815.8 89.4L820.7 94.6L825.6 97.8L830.4 102.2L833.9 103.6L836.7 103.6L840.6 109.6L844.3 112.4L847.5 116.2L850.6 126.2L854.0 125.6L857.5 126.5L861.7 133.9L864.7 139.9L867.5 135.6L871.4 139.4L874.9 143.3L879.7 151.7L884.9 161.0L888.3 172.8L891.8 165.8L895.3 171.1L898.5 173.9L906.1 187.8L908.6 187.8L910.8 195.0L913.0 204.2L914.7 220.0L916.7 245.0L919.2 263.3L921.7 269.2L926.7 271.7L930.8 272.5L936.7 275.8L946.7 276.7L956.7 277.2L970.0 280.3L980.0 281.2L1000.0 281.7L1071.0 281.3" transform="translate(0.5,1.5)" stroke="#1d4f78" stroke-opacity=".25" stroke-width="3" fill="none" filter="url(#ls)" stroke-linejoin="round"/>
</g>
<rect x="81" y="9" width="990" height="273" fill="none" stroke="#444" stroke-width="2"/>
<g clip-path="url(#pc2)"><path d="M85.3 281.3L295.0 281.3L305.0 279.2L330.0 275.5L363.3 270.8L375.0 266.7L380.0 267.0L386.7 266.2L390.0 265.0L394.2 262.0L397.5 262.0L400.8 260.8L405.0 262.0L410.8 262.2L414.2 263.3L418.3 263.8L421.7 262.8L425.8 263.7L431.7 265.8L435.0 263.7L439.2 266.7L442.5 267.0L446.7 264.2L453.3 259.5L456.7 259.5L462.5 260.8L466.7 258.3L470.0 257.5L478.3 250.0L486.7 242.5L496.7 229.7L500.0 226.3L506.7 215.8L510.0 212.5L517.5 202.8L520.8 200.5L532.5 185.0L534.7 180.4L538.9 174.9L545.1 165.8L552.1 158.2L558.3 148.5L566.0 140.6L572.2 136.4L579.9 128.1L586.1 121.0L590.3 118.6L597.2 109.6L603.5 104.7L606.9 104.4L613.9 98.5L618.1 97.1L620.6 90.8L623.6 89.4L627.8 86.9L631.9 87.1L636.8 88.8L641.0 90.1L645.1 87.8L647.9 87.1L651.4 89.0L655.6 87.1L659.0 86.7L661.5 84.9L665.3 88.1L668.5 84.6L672.2 88.1L675.7 88.1L679.2 90.1L682.4 65.1L685.4 70.7L688.9 62.8L695.8 59.9L700.0 70.0L703.1 71.7L709.7 91.5L716.7 93.9L720.8 93.9L726.2 92.9L730.4 88.1L733.9 88.8L737.4 88.1L740.8 89.0L747.1 93.9L751.2 92.5L754.7 93.9L761.7 93.2L767.9 87.4L771.7 85.3L775.6 86.2L781.8 89.0L785.3 87.4L789.0 90.1L799.2 88.1L802.6 82.9L806.1 84.3L810.3 86.9L815.8 89.4L820.7 94.6L825.6 97.8L830.4 102.2L833.9 103.6L836.7 103.6L840.6 109.6L844.3 112.4L847.5 116.2L850.6 126.2L854.0 125.6L857.5 126.5L861.7 133.9L864.7 139.9L867.5 135.6L871.4 139.4L874.9 143.3L879.7 151.7L884.9 161.0L888.3 172.8L891.8 165.8L895.3 171.1L898.5 173.9L906.1 187.8L908.6 187.8L910.8 195.0L913.0 204.2L914.7 220.0L916.7 245.0L919.2 263.3L921.7 269.2L926.7 271.7L930.8 272.5L936.7 275.8L946.7 276.7L956.7 277.2L970.0 280.3L980.0 281.2L1000.0 281.7L1071.0 281.3" stroke="#3a84b8" stroke-width="2" fill="none" stroke-linejoin="round"/></g>
<g font-family="Liberation Sans, sans-serif" font-size="10.2" fill="#444">
<text x="18.700" y="39.4">4,00 kW</text>
<text x="18.700" y="101.4">3,00 kW</text>
<text x="18.700" y="162.4">2,00 kW</text>
<text x="18.700" y="224.4">1,00 kW</text>
<text x="18.700" y="286.4">0,00 kW</text>
<text x="85.3" y="297.600" text-anchor="middle">00:00</text>
<text x="250.0" y="297.600" text-anchor="middle">04:00</text>
<text x="414.7" y="297.600" text-anchor="middle">08:00</text>
<text x="579.3" y="297.600" text-anchor="middle">12:00</text>
<text x="744.0" y="297.600" text-anchor="middle">16:00</text>
<text x="908.7" y="297.600" text-anchor="middle">20:00</text>
</g></svg>
<!-- legend -->
<div class="abs" style="left:48px;top:1027px;width:14px;height:14px;border:1px solid #ccc;padding:1px;background:#fff"><div style="width:10px;height:10px;background:#7eb0d6"></div></div>
<div class="abs" style="left:64px;top:1029px;font-size:10.200px;line-height:12px;color:#444;white-space:nowrap">PV-Leistung (kW)</div>
<div class="abs" style="left:145px;top:1027px;width:14px;height:14px;border:1px solid #ccc;padding:1px;background:#fff"><div style="width:10px;height:10px;background:#4a4a4a"></div></div>
<div class="abs" style="left:161px;top:1029px;font-size:10.200px;line-height:12px;color:#444;white-space:nowrap">Verbrauchsleistung (kW)</div>
<!-- accordion -->
<div class="abs" style="left:47px;top:1051px;width:1086px;height:60px;background:#ededed;border:1px solid #ddd;border-radius:4px"></div>
<svg class="abs" style="left:63px;top:1062px" width="14" height="16" viewBox="0 0 14 16"><path d="M3 1.800L9.800 8 3 14.200" fill="none" stroke="#222" stroke-width="2.400"/></svg>
<div class="abs" style="left:82px;top:1060px;font-size:14px;line-height:18px;color:#333;white-space:nowrap">PV-Leistung und Verbrauchsleistung</div>
</div><!-- /wrap -->
<!-- scrollbar -->
<div id="sb"><div class="th"></div>
<svg class="abs" style="left:0;top:0" width="17" height="33" viewBox="0 0 17 33"><path d="M8.500 17L14.100 22.300V25.800L8.500 20.600L2.900 25.800V22.300Z" fill="#505050"/></svg>
<svg class="abs" style="left:0;top:1047px" width="17" height="33" viewBox="0 0 17 33"><path d="M8.500 15.400L14.100 9.700V6.100L8.500 11.800L2.900 6.100V9.700Z" fill="#505050"/></svg>
</div>
<div class="abs" style="left:0;top:1079px;width:1903px;height:1px;background:#e6e6e6"></div>
</body>
</html>
